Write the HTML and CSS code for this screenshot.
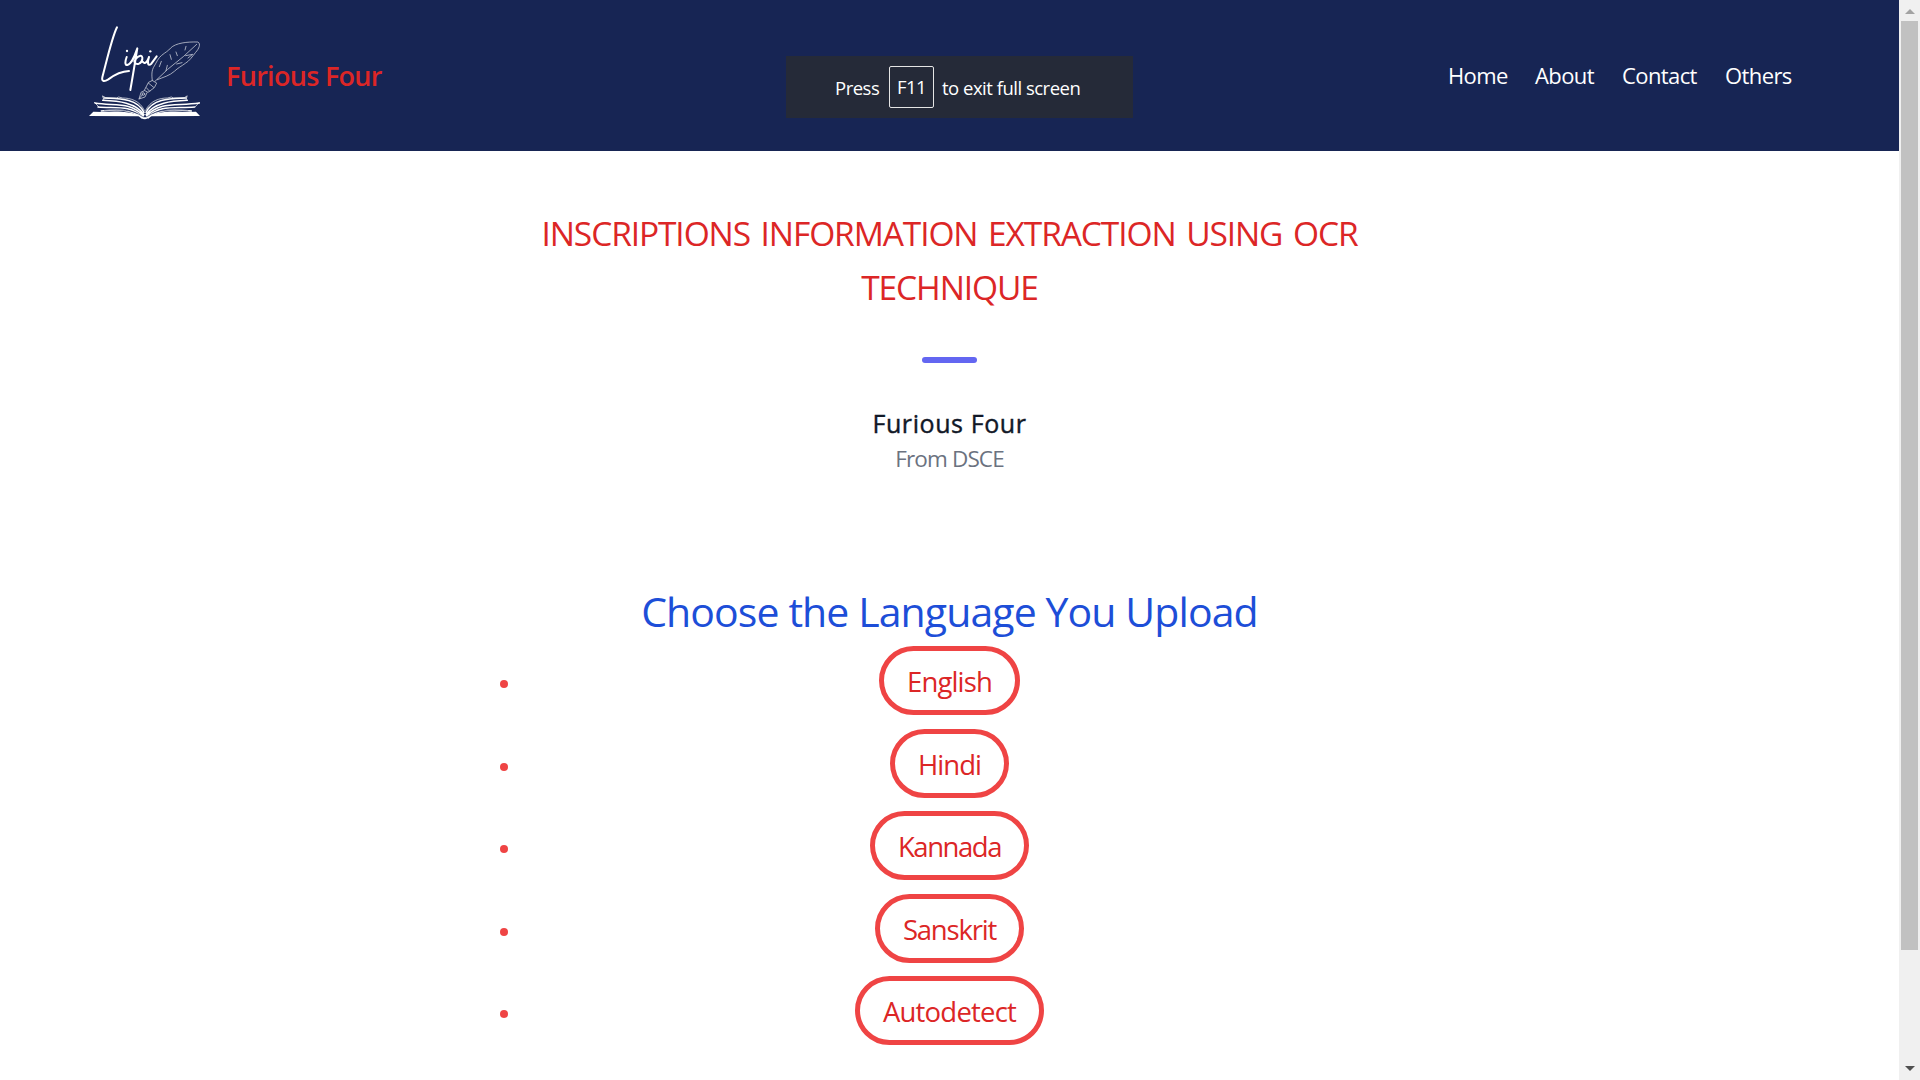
FILE: index.html
```html
<!DOCTYPE html>
<html lang="en">
<head>
<meta charset="utf-8">
<title>Lipi</title>
<link rel="stylesheet" href="styles.css">
</head>
<body>
<div class="page">
  <header class="header">
    <a class="brand">
      <svg class="logo" viewBox="0 0 390 345" fill="none" stroke="#fff" stroke-linecap="round" stroke-linejoin="round">
        <g stroke-width="6">
          <path d="M111 37C97 64 83 126 67 187C64 201 74 200 85 193C105 178 124 169 147 168"/>
          <path d="M140 126C135 139 134 151 142 150C155 147 163 126 172 100C167 130 159 180 151 225M163 139C173 119 189 118 187 132C185 146 171 151 164 143M187 139C196 151 202 139 207 126C201 145 204 155 214 146L230 124"/>
        </g>
        <g fill="#fff" stroke="none"><circle cx="141" cy="108" r="3.5"/><circle cx="211" cy="109" r="3.5"/></g>
        <g stroke-width="2.5" opacity=".72">
          <path d="M217 197C215 181 214 166 223 153C230 141 234 130 245 121C256 112 265 108 272 99C287 84 321 80 354 81C363 87 357 101 347 112C335 127 329 137 316 145C302 155 295 158 283 169C269 182 249 187 232 194"/>
          <path d="M225 199L263 163L311 124L350 88M238 155L244 139M258 167L262 151M274 133L270 119M292 122L288 111M290 147L306 143M317 122L338 118L324 129M315 105L318 94"/>
          <path d="M218 197L230 204L223 218L204 232L193 226L205 203ZM205 204L221 217M199 218L209 229M193 227L183 232L177 252L195 246L201 233M177 252L189 237"/>
          <circle cx="190" cy="237" r="4"/>
        </g>
        <path fill="#fff" stroke="none" d="M27 303L40 290L66 291C105 288 163 288 187 307L201 307C224 288 282 288 322 291L348 290L360 303L207 304Q195 322 180 304Z"/>
        <g stroke-width="4.5">
          <path d="M72 249C113 251 170 248 192 292M68 256C116 258 168 263 192 299M45 264C101 274 151 259 190 302M54 276C105 281 150 268 188 307M64 288C107 283 155 281 186 309"/>
          <path d="M318 249C277 251 220 248 198 292M322 256C274 258 222 263 198 299M358 264C289 274 239 259 200 302M344 276C285 281 240 268 202 307M334 288C283 283 235 281 204 309"/>
        </g>
        <g stroke="#172554" stroke-width="2"><path d="M73 285C119 284 157 282 187 304M324 285C271 284 233 282 203 304"/></g>
        <g stroke-width="2"><path d="M68 243L77 248L109 249L116 246L128 249C150 249 179 256 193 286M321 243L313 248L281 249L274 246L262 249C240 249 211 256 197 286M43 262L56 275M68 244L72 256M358 262L346 275M321 244L318 256"/></g>
      </svg>
      <span class="brand-name">Furious Four</span>
    </a>
    <nav class="nav">
      <a>Home</a><a>About</a><a>Contact</a><a>Others</a>
    </nav>
  </header>
  <main class="main">
    <h1 class="title">INSCRIPTIONS INFORMATION EXTRACTION USING OCR<br>TECHNIQUE</h1>
    <span class="rule"></span>
    <h2 class="team">Furious Four</h2>
    <p class="from">From DSCE</p>
    <h2 class="choose">Choose the Language You Upload</h2>
    <ul class="languages">
      <li><button class="lang english">English</button></li>
      <li><button class="lang hindi">Hindi</button></li>
      <li><button class="lang kannada">Kannada</button></li>
      <li><button class="lang sanskrit">Sanskrit</button></li>
      <li><button class="lang autodetect">Autodetect</button></li>
    </ul>
  </main>
</div>
<aside class="scrollbar"><i class="up"></i><i class="thumb"></i><i class="down"></i></aside>
<div class="toast"><span class="press">Press</span><kbd>F11</kbd><span class="exit">to exit full screen</span></div>
</body>
</html>
```
FILE: styles.css
```css
* { box-sizing: border-box; margin: 0; padding: 0; }
body { display: flex; width: 1920px; height: 1080px; overflow: hidden; background: #fff; font-family: "Open Sans", "Noto Sans", sans-serif; }
.page { width: 1899px; height: 1080px; }
.header { display: flex; justify-content: space-between; height: 151px; padding: 15px 107px 0 80px; background: #172554; }
.brand { display: flex; }
.logo { width: 130px; height: 115px; }
.brand-name { margin: 40px 0 0 16px; color: #dc2626; font-size: 27px; font-weight: 600; line-height: 42px; letter-spacing: -.7px; }
.nav { display: grid; grid-template-columns: 87px 87px 103px 67px; padding-top: 42px; color: #fff; font-size: 22px; line-height: 36px; letter-spacing: -.6px; white-space: nowrap; }
.main { display: flex; flex-direction: column; align-items: center; padding-top: 55px; }
.title { width: 900px; color: #dc2626; font-size: 33.5px; font-weight: 400; line-height: 54px; letter-spacing: -1.1px; word-spacing: 3px; text-align: center; }
.rule { width: 55px; height: 6px; margin-top: 43px; border-radius: 3px; background: #6366f1; }
.team { margin-top: 43px; color: #111827; font-size: 25px; font-weight: 400; line-height: 35px; letter-spacing: .6px; -webkit-text-stroke: .4px #111827; }
.from { color: #6b7280; font-size: 22.5px; line-height: 35px; letter-spacing: -.85px; }
.choose { margin-top: 110px; color: #1d4ed8; font-size: 41px; font-weight: 400; line-height: 50px; letter-spacing: -.9px; }
.languages { width: 900px; margin-top: 10px; color: #ef4444; list-style: none; }
.languages li { display: flex; height: 82.5px; }
.languages li::before { content: ""; width: 8px; height: 8px; margin: 34px -8px 0 0; border-radius: 50%; background: #ef4444; }
.lang { height: 69px; margin: 0 auto; padding: 2px 23px 0; border: 5px solid #ef4444; border-radius: 34.5px; background: #fff; color: #dc2626; font: 400 27.5px/57px "Open Sans", sans-serif; }
.english { letter-spacing: -.85px; }
.hindi { letter-spacing: -1px; }
.kannada { letter-spacing: -1.45px; }
.sanskrit { letter-spacing: -1.2px; }
.autodetect { letter-spacing: -.8px; }
.scrollbar { display: flex; flex-direction: column; align-items: center; width: 21px; height: 1080px; background: #f0f0f0; }
.up { border: 5px solid transparent; border-top: 0; border-bottom: 5px solid #a3a3a3; margin-top: 9px; }
.thumb { width: 17px; height: 929px; margin: 7px 0 116px; background: #c1c1c1; }
.down { border: 5px solid transparent; border-bottom: 0; border-top: 5px solid #505050; }
.toast { position: absolute; left: 786px; top: 56px; width: 347px; height: 62px; display: flex; align-items: center; padding-left: 49px; background: #252a38; color: #fff; font-size: 18.5px; letter-spacing: -.5px; white-space: nowrap; }
.press { width: 54px; }
.toast kbd { width: 45px; height: 42px; margin-right: 8px; border: 1.5px solid #e5e5e5; border-radius: 2px; font: inherit; line-height: 40px; text-align: center; }
```
